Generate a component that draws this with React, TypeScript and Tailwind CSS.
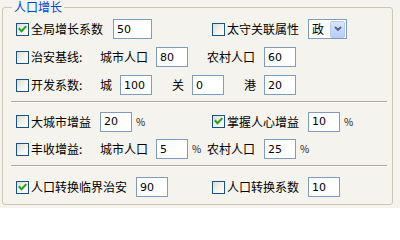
import React from "react";

const FONT = { fontFamily: '"Noto Sans CJK SC", "Noto Sans", sans-serif' };

function Check({ checked }: { checked?: boolean }) {
  return (
    <span className="relative inline-block w-[13px] h-[13px] shrink-0 border border-[#1c5180] bg-gradient-to-br from-[#dcdcd5] via-[#f2f2ee] to-white">
      {checked && (
        <svg viewBox="0 0 11 11" className="absolute left-0 top-0 w-[11px] h-[11px]">
          <path d="M2.5 5 L4.5 7.2 L8.6 2.8" fill="none" stroke="#21a121" strokeWidth="2" strokeLinecap="square" />
        </svg>
      )}
    </span>
  );
}

function Field({ value, w = "w-[32px]" }: { value: string; w?: string }) {
  return (
    <span
      className={`${w} h-[20px] shrink-0 border border-[#7f9db9] bg-white flex items-center pl-[3px] text-black leading-none`}
      style={{ fontFamily: '"DejaVu Sans", sans-serif', fontSize: "11px" }}
    >
      {value}
    </span>
  );
}

function Label({ children, w }: { children: React.ReactNode; w: string }) {
  return <span className={`${w} shrink-0 text-[12px] leading-[14px] text-black whitespace-nowrap`}>{children}</span>;
}

function CheckLabel({ text, checked, w }: { text: string; checked?: boolean; w: string }) {
  return (
    <span className={`${w} shrink-0 flex items-center gap-[2px]`}>
      <Check checked={checked} />
      <span className="text-[12px] leading-[14px] text-black whitespace-nowrap">{text}</span>
    </span>
  );
}

function Pct({ w }: { w: string }) {
  return <span className={`${w} shrink-0 text-[10px] leading-none text-[#222] pl-[4px]`}>%</span>;
}

function Sep() {
  return <div className="-ml-[5px] w-[376px] h-[2px] border-t border-[#aca899] border-b border-b-white" />;
}

export default function App() {
  return (
    <div className="relative w-[400px] h-[208px] bg-[#f4f3ee] pt-[7px] pl-[2px]" style={FONT}>
      <span className="absolute left-[12px] top-0 px-[2px] bg-[#f4f3ee] text-[12px] leading-[14px] text-[#0046d5]">
        人口增长
      </span>
      <div className="w-[391px] h-[198px] border border-[#c9c8b6] rounded-[3px] pt-[7px] pl-[13px]">
        {/* Row 1 */}
        <div className="h-[28px] flex items-center">
          <CheckLabel text="全局增长系数" checked w="w-[97px]" />
          <Field value="50" w="w-[39px]" />
          <span className="w-[60px] shrink-0" />
          <CheckLabel text="太守关联属性" w="w-[96px]" />
          <span className="w-[39px] h-[20px] shrink-0 border border-[#7f9db9] bg-white flex items-center justify-between pl-[3px] pr-[1px]">
            <span className="text-[12px] leading-[14px] text-black">政</span>
            <span className="w-[15px] h-[17px] rounded-[2px] border border-[#b7c9f3] bg-gradient-to-b from-[#dbe5fd] to-[#b9ccf8] flex items-center justify-center">
              <svg viewBox="0 0 8 6" className="w-[8px] h-[6px]">
                <path d="M1 1 L4 4 L7 1" fill="none" stroke="#4d6185" strokeWidth="1.8" />
              </svg>
            </span>
          </span>
        </div>
        {/* Row 2 */}
        <div className="h-[28px] flex items-center">
          <CheckLabel text="治安基线:" w="w-[84px]" />
          <Label w="w-[56px]">城市人口</Label>
          <Field value="80" />
          <span className="w-[19px] shrink-0" />
          <Label w="w-[57px]">农村人口</Label>
          <Field value="60" />
        </div>
        {/* Row 3 */}
        <div className="h-[28px] flex items-center">
          <CheckLabel text="开发系数:" w="w-[84px]" />
          <Label w="w-[20px]">城</Label>
          <Field value="100" />
          <span className="w-[20px] shrink-0" />
          <Label w="w-[20px]">关</Label>
          <Field value="0" />
          <span className="w-[20px] shrink-0" />
          <Label w="w-[20px]">港</Label>
          <Field value="20" />
        </div>
        <div className="h-[2px]" />
        <Sep />
        <div className="h-[5px]" />
        {/* Row 4 */}
        <div className="h-[27px] flex items-center">
          <CheckLabel text="大城市增益" w="w-[84px]" />
          <Field value="20" />
          <Pct w="w-[80px]" />
          <CheckLabel text="掌握人心增益" checked w="w-[96px]" />
          <Field value="10" />
          <Pct w="w-[20px]" />
        </div>
        {/* Row 5 */}
        <div className="h-[28px] flex items-center">
          <CheckLabel text="丰收增益:" w="w-[84px]" />
          <Label w="w-[56px]">城市人口</Label>
          <Field value="5" />
          <Pct w="w-[19px]" />
          <Label w="w-[57px]">农村人口</Label>
          <Field value="25" />
          <Pct w="w-[20px]" />
        </div>
        <div className="h-[2px]" />
        <Sep />
        <div className="h-[6px]" />
        {/* Row 6 */}
        <div className="h-[28px] flex items-center">
          <CheckLabel text="人口转换临界治安" checked w="w-[120px]" />
          <Field value="90" />
          <span className="w-[44px] shrink-0" />
          <CheckLabel text="人口转换系数" w="w-[96px]" />
          <Field value="10" />
        </div>
      </div>
    </div>
  );
}
